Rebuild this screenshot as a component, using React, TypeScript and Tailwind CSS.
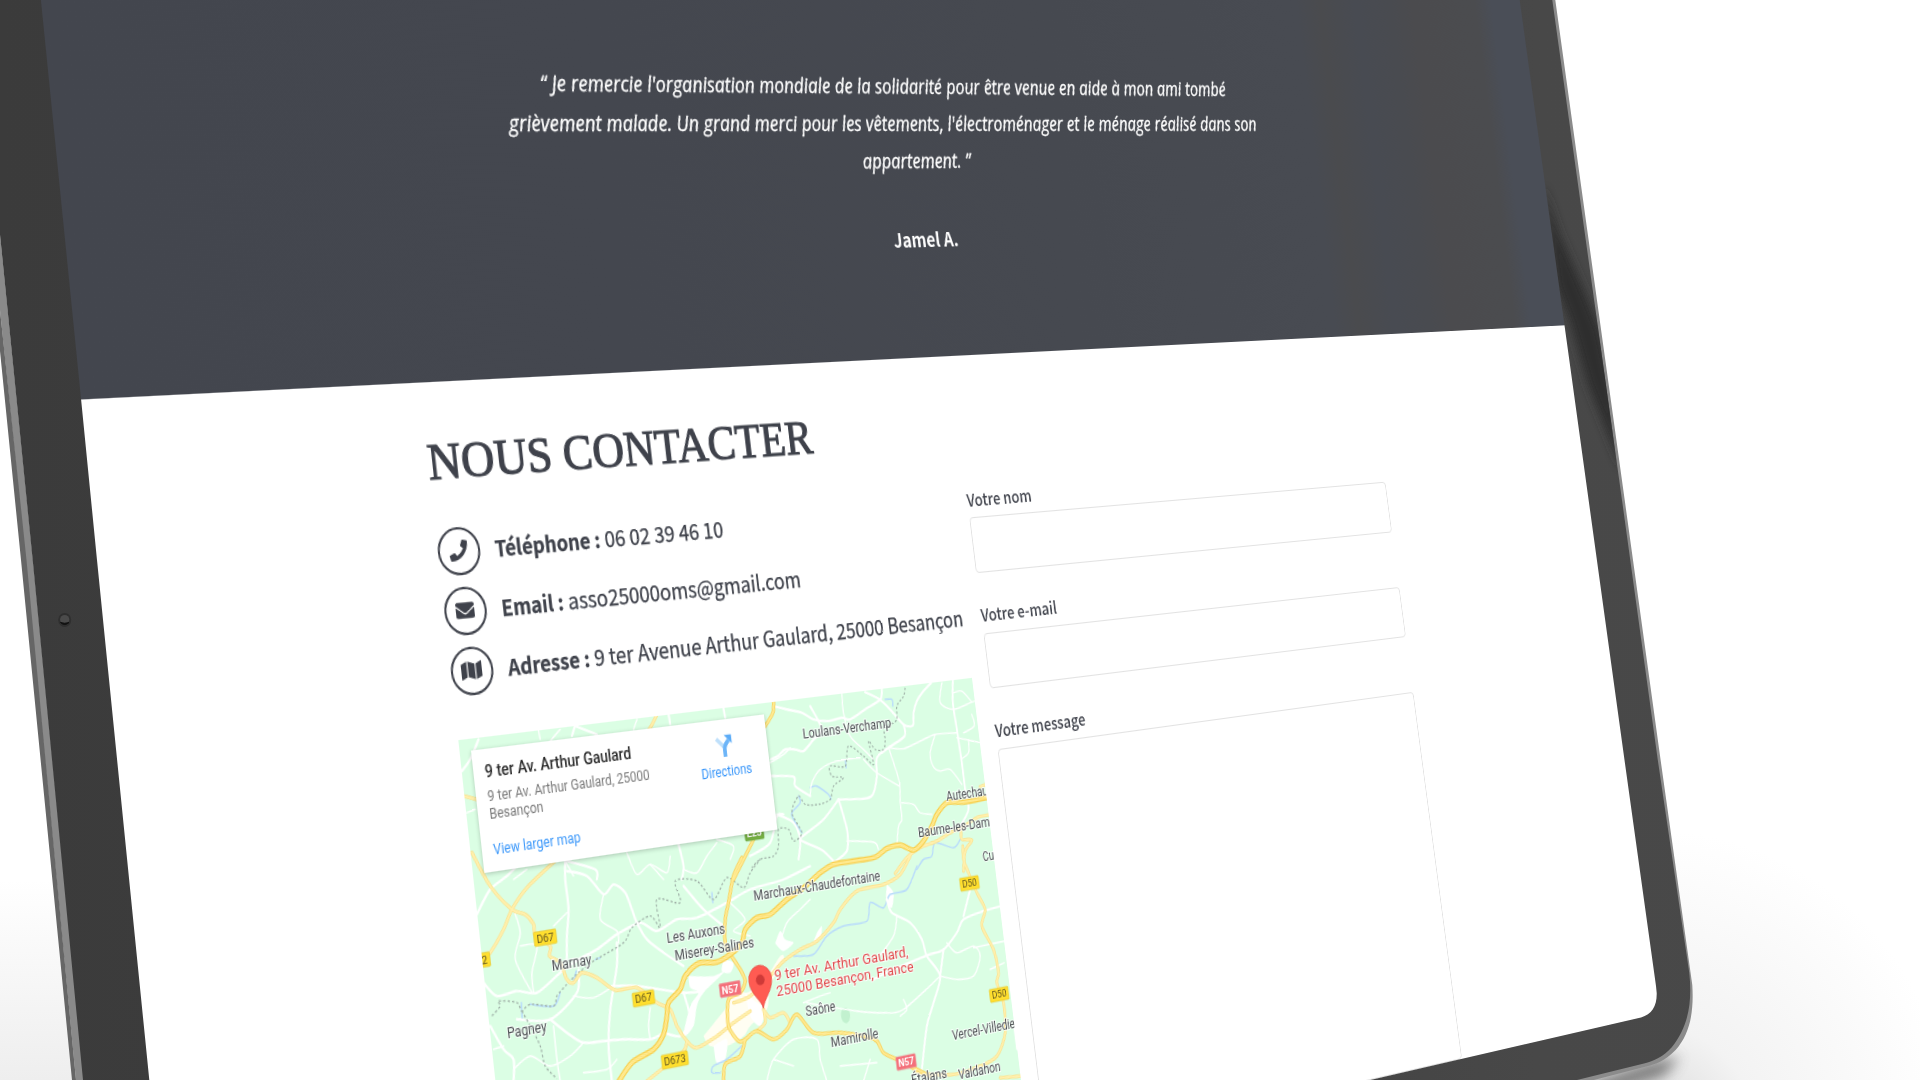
import React from "react";
import { FaEnvelope, FaMap, FaPhone } from "react-icons/fa";

type Pt = [number, number];

/* ---------- map geometry ---------- */

// Perspective of the tilted page: page units (u, v in 0..1) to viewport pixels.
const PX = { a: 2072.8, b: 91.6, c: 81.1 };
const PY = { d: 48.4, e: 923.4, f: 399.5 };
const PW = { g: 0.37675, h: -0.0236 };

function toPage(x: number, y: number): Pt {
  const a = PX.a - PW.g * x;
  const b = PX.b - PW.h * x;
  const r = x - PX.c;
  const c = PY.d - PW.g * y;
  const d = PY.e - PW.h * y;
  const s = y - PY.f;
  const det = a * d - b * c;
  return [((r * d - b * s) / det) * 1732, ((a * s - c * r) / det) * 750];
}

// The map is surveyed on four tiles, each with its origin and three units to a pixel.
const TILES: Record<string, Pt> = {
  A: [750, 670],
  B: [450, 860],
  C: [740, 860],
  D: [450, 680],
};

function at(tile: string, x: number, y: number): Pt {
  const [ox, oy] = TILES[tile];
  return toPage(ox + x / 3, oy + y / 3);
}

function trace(spec: string): string {
  const tile = spec[0];
  const pts = spec
    .slice(2)
    .split(" ")
    .map((p) => {
      const [x, y] = p.split(",").map(Number);
      return at(tile, x, y);
    });
  let d = `M${pts[0][0].toFixed(1)} ${pts[0][1].toFixed(1)}`;
  for (let i = 0; i < pts.length - 1; i++) {
    const p0 = pts[Math.max(0, i - 1)];
    const p1 = pts[i];
    const p2 = pts[i + 1];
    const p3 = pts[Math.min(pts.length - 1, i + 2)];
    const k = 7;
    d += `C${(p1[0] + (p2[0] - p0[0]) / k).toFixed(1)} ${(p1[1] + (p2[1] - p0[1]) / k).toFixed(1)} ${(p2[0] - (p3[0] - p1[0]) / k).toFixed(1)} ${(p2[1] - (p3[1] - p1[1]) / k).toFixed(1)} ${p2[0].toFixed(1)} ${p2[1].toFixed(1)}`;
  }
  return d;
}

const MOTORWAYS = [
  "B 500,675 545,610 610,570 640,525 650,470 655,430 690,390 705,350 745,312 800,308 840,285 875,250 885,210 920,175 960,165 1010,120 1060,85 1110,40 1150,15 1210,5 1275,-7 1310,-33 1350,-43 1390,-28 1420,-55 1445,-100 1460,-135 1490,-170 1540,-172 1620,-188",
];

const MAIN_ROADS = [
  "B 875,-5 850,50 835,130 825,180 825,250 838,285",
  "B 840,285 870,330 885,365 870,400 835,420 835,500 865,545 885,540 920,515 970,540 1010,510 1040,465 1090,520 1170,520 1240,530 1280,545 1300,580 1340,600 1400,630 1440,650",
  "B 885,540 870,590 825,615 820,670",
  "D 970,62 968,100 945,140",
  "D 915,470 880,540 850,600",
];

const MINOR_ROADS = [
  "B 65,-20 120,80 185,150 225,165 250,195 255,225 300,260 298,290 330,310 350,360 370,370 395,340 440,355 495,392 560,385 620,430 660,450 680,500 710,545 740,565 800,530 850,490 900,455",
  "B 320,0 230,85 185,150 160,210 120,280 90,310",
  "B 590,665 640,625 700,575 710,545",
  "B 1380,-10 1350,45 1300,75 1220,95 1170,150 1150,190 1100,245 1050,270 1000,305 960,350 900,410 850,430",
  "B 940,450 960,475 1000,460 1020,490",
  "B 940,450 945,490 920,515",
  "C 668,-40 670,0 685,40 710,100 735,150 725,200 760,270 775,340 770,370 790,430 795,520 770,590 720,620 640,645 540,640 500,610",
  "C 780,655 842,650",
  "A 435,612 470,565 510,535 560,515 600,490 630,480 635,510 665,512 645,545 640,605",
  "A 630,480 680,445 722,435",
  "A 690,352 708,344",
  "D 620,105 600,145 560,200",
  "D 40,350 80,360",
];

const LANES = [
  "A 70,110 110,120 155,130 190,150 235,155 275,145 300,150 345,120 390,90 395,60",
  "A 345,68 385,88 420,120 460,165 488,168 490,130 500,95 520,65 543,40",
  "A 460,165 463,200 415,235 380,265 380,320 368,375 340,388 265,390",
  "A 62,270 85,258 105,240 135,240 160,245 190,210 215,180 180,110",
  "A 62,320 130,322 135,350 180,380",
  "A 265,390 280,440 292,490 290,545 250,580",
  "A 265,390 220,450 170,490 150,510 190,530 220,545 250,575",
  "A 80,435 130,460 150,510 145,570",
  "A 608,32 608,100 620,180 635,280 645,360 655,420 630,470",
  "A 0,560 60,520 80,440 100,435",
  "B 345,-5 345,60 355,150 350,230 350,300",
  "B 350,35 410,50 460,105 490,75 525,100 545,150 560,190 590,240 640,280 700,320",
  "B 220,0 170,50 120,90 80,165",
  "B 100,370 140,410 200,395 260,400 330,340 385,300 440,270 500,225 570,190 620,215 680,180 740,175 830,130 900,90 1000,60 1080,20",
  "B 700,80 760,150 820,200",
  "B 500,250 500,320 480,450 475,560 485,665",
  "B 485,380 560,380 700,400 760,395",
  "B 385,330 380,400 300,480 200,480",
  "B 300,480 350,520 400,550 460,545 520,540 600,540 640,520",
  "B 120,500 160,570 190,600 190,665",
  "B 700,400 720,480 690,530 640,520",
  "C 440,120 455,160 510,190 545,240 560,290 600,350 580,430 560,500 545,630",
  "C 782,140 730,155 670,180 650,220 610,270 555,290 440,340 400,360",
  "C 610,270 600,350",
  "C 690,90 670,170",
  "D 85,180 60,240 35,275",
  "D 375,138 365,170",
  "D 375,140 440,165",
  "D 655,105 660,135",
  "D 820,88 825,115",
  "D 685,495 700,560 695,600",
  "D 440,600 435,570 350,545",
];

const TRACKS = [
  "A 275,75 280,130 300,200 340,240 370,270",
  "A 180,380 185,340 210,300 260,275 330,265",
  "A 415,235 430,280 448,340 450,400 455,450 445,470 440,530",
  "A 340,270 380,310 448,350",
  "A 455,400 490,405 510,430 545,435",
  "A 575,40 570,100 610,120 665,98 695,90",
  "A 610,70 635,65 665,98",
  "A 665,135 672,170 640,190",
  "A 415,235 460,238 510,215 555,195 620,190",
  "A 555,195 540,250 548,290 570,305 600,300 635,345",
  "A 620,205 655,212 690,220",
  "A 655,212 655,250 632,270",
  "A 290,515 370,518 385,540",
  "B 460,105 450,180 500,215 505,250",
  "B 350,160 310,200",
  "B 190,150 210,220 195,300 245,400",
  "B 210,260 260,258 245,340 250,400",
  "B 310,500 320,600 330,665",
  "B 130,570 160,560",
  "B 190,630 240,590 300,620 360,590 400,550",
  "B 400,640 470,630 500,600",
  "B 370,410 430,415 490,380",
  "B 600,445 595,500 600,540",
  "B 950,665 970,600 1030,540 1100,540 1110,600 1130,665",
  "B 970,600 1030,620",
  "B 1060,430 1110,410 1140,400",
  "B 990,250 1010,190 1050,150 1080,120",
  "B 1340,170 1330,230 1280,300",
  "B 840,130 885,180 850,215 900,230",
  "C 600,350 650,360 700,350 720,290 700,260 650,280 620,250",
  "C 700,265 792,245",
  "C 750,330 792,310",
  "C 200,430 350,455 430,460 490,450 600,350",
  "C 390,600 370,665",
  "C 300,620 410,610",
  "C 820,490 830,570",
  "C 480,470 500,450 490,420",
  "D 265,155 270,180",
  "D 560,120 550,150",
  "D 50,400 75,390",
  "D 230,570 190,600",
  "D 345,545 370,590",
  "D 530,520 560,585 600,555 650,580 660,530",
  "D 600,555 640,600",
  "D 700,570 740,580 770,530 800,490",
  "D 840,540 850,500 800,480",
  "D 960,250 1000,225 1020,205",
  "D 330,150 300,185",
];

const BORDERS = [
  "A 465,55 460,80 440,110 440,150 420,165 400,170 405,210 400,240 375,240 355,215 370,285 340,260 295,230 285,290 240,290 245,320 280,325 250,350 240,390 205,405 165,405 145,380 125,430 155,490 130,515 115,480 85,480 85,530 70,560 30,570 5,595",
  "B 125,470 150,440 145,425 200,430 215,455 240,435 310,440 320,410 350,375 385,340 430,305 520,250 545,205 600,170 630,205 620,120 690,130 675,65 740,65 790,120 830,55 880,85 900,40 930,0",
  "B 215,455 240,500 270,560 285,620 320,658",
];

const RIVERS = [
  "A 145,380 150,400 125,430 130,450 155,490",
  "A 180,355 200,350 235,375 242,390",
  "A 285,270 288,295",
  "A 405,90 425,90 428,110",
  "A 500,600 520,570 545,560 555,520 610,535 630,510",
  "B 378,335 370,368",
  "B 213,430 216,478",
  "B 330,400 310,440 240,435",
  "B 1400,20 1370,90 1320,105 1300,145 1260,130 1250,185 1180,200 1130,230 1090,285 1030,290",
  "B 875,560 830,600 790,620 785,640 810,640",
  "B 450,295 435,300",
  "B 785,100 788,130",
];

const TOWNS = [
  "B 760,530 800,480 830,440 850,380 890,400 950,350 990,290 1000,300 960,380 950,450 900,500 880,530 830,560 780,560 760,530",
];

const SUBURBS = [
  "B 715,350 790,350 830,330 760,400 740,440 730,500 700,530 720,440 745,400 720,385 715,350",
  "B 885,400 920,430 945,450 930,500 900,470 885,400",
  "B 820,300 850,310 840,340 815,335 820,300",
  "B 975,252 990,215 1005,240 1030,250 1000,275 975,252",
  "B 790,560 830,540 825,600 800,612 790,560",
  "B 1310,75 1330,100 1325,145 1308,125 1310,75",
  "B 1100,220 1115,200 1110,240 1090,250 1100,220",
];

interface Label {
  text: string;
  tile: string;
  from: Pt;
  to: Pt;
}

const LABELS: Label[] = [
  { text: "Loulans-Verchamp", tile: "A", from: [159, 207], to: [424, 175] },
  { text: "Autechaux", tile: "A", from: [590, 394], to: [728, 374] },
  { text: "Baume-les-Dames", tile: "A", from: [505, 503], to: [752, 467] },
  { text: "Cusance", tile: "A", from: [699, 576], to: [806, 560] },
  { text: "Marchaux-Chaudefontaine", tile: "B", from: [912, 123], to: [1291, 63] },
  { text: "Les Auxons", tile: "B", from: [651, 251], to: [826, 227] },
  { text: "Miserey-Salines", tile: "B", from: [675, 303], to: [913, 264] },
  { text: "Marnay", tile: "B", from: [306, 334], to: [425, 314] },
  { text: "Pagney", tile: "B", from: [172, 537], to: [291, 517] },
  { text: "Saône", tile: "B", from: [1068, 471], to: [1157, 455] },
  { text: "Mamirolle", tile: "B", from: [1144, 565], to: [1286, 538] },
  { text: "Vercel-Villedieu", tile: "C", from: [638, 544], to: [842, 504] },
  { text: "Valdahon", tile: "C", from: [656, 659], to: [783, 643] },
  { text: "Étalans", tile: "C", from: [515, 678], to: [622, 660] },
];

const ADDRESS: Label[] = [
  { text: "9 ter Av. Arthur Gaulard,", tile: "B", from: [974, 363], to: [1376, 298] },
  { text: "25000 Besançon, France", tile: "B", from: [980, 412], to: [1392, 341] },
];

interface Shield {
  text: string;
  tile: string;
  x: number;
  y: number;
  w: number;
  tone: "yellow" | "red" | "green";
}

const SHIELDS: Shield[] = [
  { text: "D67", tile: "B", x: 285, y: 235, w: 22, tone: "yellow" },
  { text: "D67", tile: "B", x: 580, y: 417, w: 22, tone: "yellow" },
  { text: "D673", tile: "B", x: 674, y: 602, w: 27, tone: "yellow" },
  { text: "D12", tile: "B", x: 85, y: 304, w: 22, tone: "yellow" },
  { text: "D50", tile: "C", x: 688, y: 72, w: 22, tone: "yellow" },
  { text: "D50", tile: "C", x: 777, y: 405, w: 22, tone: "yellow" },
  { text: "N57", tile: "B", x: 840, y: 389, w: 22, tone: "red" },
  { text: "N57", tile: "C", x: 498, y: 608, w: 22, tone: "red" },
  { text: "E23", tile: "D", x: 912, y: 461, w: 20, tone: "green" },
];

const SHIELD_FILL = { yellow: "#ffdf2e", red: "#f4707a", green: "#76b043" };
const SHIELD_EDGE = { yellow: "#e8c832", red: "#ee8d94", green: "#6aa33b" };

function Strokes({ lines, color, width, dash }: { lines: string[]; color: string; width: number; dash?: string }) {
  return (
    <g fill="none" stroke={color} strokeWidth={width} strokeDasharray={dash} strokeLinecap={dash ? "butt" : "round"} strokeLinejoin="round">
      {lines.map((l) => (
        <path key={l} d={trace(l)} />
      ))}
    </g>
  );
}

function MapText({ label, size, fill }: { label: Label; size: number; fill: string }) {
  const [x, y] = at(label.tile, label.from[0], label.from[1]);
  const [x2] = at(label.tile, label.to[0], label.to[1]);
  return (
    <text
      x={x}
      y={y}
      fontSize={size}
      fill={fill}
      stroke="#ffffff"
      strokeWidth={1.8}
      strokeOpacity={0.8}
      paintOrder="stroke"
      textLength={x2 - x}
      lengthAdjust="spacingAndGlyphs"
    >
      {label.text}
    </text>
  );
}

function MapDrawing() {
  const [px, py] = at("B", 940, 447);
  const [gx, gy] = at("C", 316, 468);
  return (
    <svg viewBox="305.7 304.5 551 446" className="block h-[446px] w-[551px] font-[Roboto,sans-serif]">
      <rect x="305" y="304" width="552" height="447" fill="#dbfee4" />
      <ellipse cx={gx} cy={gy} rx="5" ry="7" fill="#c2f1cf" />
      {TOWNS.map((t) => (
        <path key={t} d={trace(t)} fill="#fffef2" />
      ))}
      {SUBURBS.map((t) => (
        <path key={t} d={trace(t)} fill="#ffffff" />
      ))}
      <Strokes lines={RIVERS} color="#b9dcfb" width={1.5} />
      <Strokes lines={TRACKS} color="#ffffff" width={1.4} />
      <Strokes lines={LANES} color="#ffffff" width={2.2} />
      <Strokes lines={BORDERS} color="#9fb0a7" width={1.2} dash="2.2 2" />
      <Strokes lines={MINOR_ROADS} color="#fbe08a" width={3.2} />
      <Strokes lines={MINOR_ROADS} color="#fff0ae" width={1.9} />
      <Strokes lines={MAIN_ROADS} color="#f8d25c" width={3.6} />
      <Strokes lines={MAIN_ROADS} color="#ffeb94" width={1.9} />
      <Strokes lines={MOTORWAYS} color="#f9cf4c" width={5} />
      <Strokes lines={MOTORWAYS} color="#fff0a0" width={2.4} />
      <Strokes lines={MOTORWAYS} color="#fbd965" width={0.6} />
      {SHIELDS.map((s) => {
        const [x, y] = at(s.tile, s.x, s.y);
        return (
          <g key={`${s.tile}${s.x}`}>
            <rect x={x - s.w / 2} y={y - 5.9} width={s.w} height={11.8} rx={0.8} fill={SHIELD_FILL[s.tone]} stroke={SHIELD_EDGE[s.tone]} strokeWidth={0.7} />
            <text x={x} y={y + 3.4} fontSize={9.6} textAnchor="middle" fontWeight={s.tone === "yellow" ? 400 : 700} fill={s.tone === "yellow" ? "#5f5420" : "#ffffff"}>
              {s.text}
            </text>
          </g>
        );
      })}
      {LABELS.map((l) => (
        <MapText key={l.text} label={l} size={12.2} fill="#4c5053" />
      ))}
      {ADDRESS.map((l) => (
        <MapText key={l.text} label={l} size={13.6} fill="#e0484a" />
      ))}
      <g transform={`translate(${px} ${py})`}>
        <path d="M0 0C-1.5-8-12.2-14-12.2-25.5A12.2 12.2 0 0 1 12.2-25.5C12.2-14 1.5-8 0 0Z" fill="#ff5b52" stroke="#e2463f" strokeWidth="0.7" />
        <circle cx="0" cy="-25" r="4.6" fill="#cf3a38" />
      </g>
    </svg>
  );
}

function MapCard() {
  return (
    <div className="absolute left-[11px] top-[10px] flex h-[103px] w-[301px] justify-between bg-white pl-[11.5px] pr-[19px] font-[Roboto,sans-serif] text-[12px] shadow-[0_1px_4px_rgba(0,0,0,0.22)]">
      <div className="flex flex-col">
        <p className="mt-[9.5px] text-[14px] leading-[18px] font-medium text-[#2b2b2b]">9 ter Av. Arthur Gaulard</p>
        <p className="mt-[5.5px] w-[180px] leading-[15px] text-[#7a7a7a]">9 ter Av. Arthur Gaulard, 25000 Besançon</p>
        <p className="mt-[15px] leading-[15px] text-[#3a97fa]">View larger map</p>
      </div>
      <div className="flex flex-col items-center pt-[13px]">
        <svg viewBox="0 0 18 20" className="h-[20px] w-[18px]">
          <path d="M1 3.5 8.3 11" stroke="#bfe0fb" strokeWidth="3.6" fill="none" />
          <path d="M9 20V13.5C9 10 10.5 8.5 14 5.5" stroke="#6db5f8" strokeWidth="3.9" fill="none" />
          <path d="M9.5 0.8H17.2V8.8Z" fill="#5cacf7" />
        </svg>
        <span className="mt-[6px] leading-[14px] text-[#3a97fa]">Directions</span>
      </div>
    </div>
  );
}

/* ---------- page ---------- */

function Testimonial() {
  return (
    <section className="flex h-[400px] flex-col items-center bg-[linear-gradient(91deg,#43464e_0%,#44474f_30%,#464950_60%,#484b52_80%,#4a4b4e_82%,#484b52_85%,#494b50_88%,#4b4b4e_90%,#4b4c4f_95.5%,#4a4e57_97%,#4a4e57_100%)] pt-[121.6px] text-center text-white shadow-[3px_0_0_0_#4a4e57,-3px_0_0_0_#43464e]">
      <p className="pl-[2px] font-['Open_Sans',sans-serif] text-[19.5px] leading-[36px] whitespace-nowrap italic [-webkit-text-stroke:0.3px_#ffffff]">
        “ Je remercie l'organisation mondiale de la solidarité pour être venue en aide à mon ami tombé
        <br />
        grièvement malade. Un grand merci pour les vêtements, l'électroménager et le ménage réalisé dans son
        <br />
        appartement. ”
      </p>
      <p className="mt-[39.6px] text-[18.4px] leading-[36px] font-bold">Jamel A.</p>
    </section>
  );
}

function ContactRow({ icon, label, value }: { icon: React.ReactNode; label: string; value: string }) {
  return (
    <li className="flex h-[40px] items-center gap-[14.6px]">
      <span className="flex size-[41.4px] shrink-0 items-center justify-center rounded-full border-[2.8px] border-[#3f424b]">{icon}</span>
      <p className="text-[19.45px] leading-[40px] whitespace-nowrap [-webkit-text-stroke:0.25px_#3f424b]">
        <strong className="text-[18.6px] font-bold">{label} :</strong> {value}
      </p>
    </li>
  );
}

function Field({ label, area }: { label: string; area?: boolean }) {
  return (
    <label className="flex flex-col gap-[5.6px]">
      <span className="text-[16px] leading-[24px] font-medium">{label}</span>
      {area ? (
        <textarea className="h-[377px] w-full resize-none rounded-[4px] border border-[#e2e2e2] bg-transparent" />
      ) : (
        <input className="h-[52.4px] w-full rounded-[4px] border border-[#e2e2e2] bg-transparent" />
      )}
    </label>
  );
}

function Contact() {
  return (
    <section className="h-[750px] bg-white px-[305.5px] pt-[42.8px] text-[#3f424b] shadow-[3px_0_0_0_#ffffff,-3px_0_0_0_#ffffff]">
      <h2 className="h-[50px] font-['Liberation_Serif',serif] text-[45.1px] leading-[50px] whitespace-nowrap [-webkit-text-stroke:1.1px_#3f424b]">NOUS CONTACTER</h2>
      <div className="grid grid-cols-[551px_551px] gap-[20px]">
        <div className="pt-[32.6px]">
          <ul className="flex flex-col gap-[11px]">
            <ContactRow icon={<FaPhone className="size-[18px]" />} label="Téléphone" value="06 02 39 46 10" />
            <ContactRow icon={<FaEnvelope className="size-[18px]" />} label="Email" value="asso25000oms@gmail.com" />
            <ContactRow icon={<FaMap className="size-[20px]" />} label="Adresse" value="9 ter Avenue Arthur Gaulard, 25000 Besançon" />
          </ul>
          <div className="relative mt-[37px] h-[446px] overflow-hidden">
            <MapDrawing />
            <MapCard />
          </div>
        </div>
        <form className="flex flex-col gap-[27.2px] pt-[32.1px]">
          <Field label="Votre nom" />
          <Field label="Votre e-mail" />
          <Field label="Votre message" area />
        </form>
      </div>
    </section>
  );
}

/* ---------- device ---------- */

function Backdrop() {
  return (
    <svg viewBox="0 0 1920 1080" className="absolute inset-0 h-full w-full">
      <defs>
        <linearGradient id="floorLeft" x1="0" y1="0" x2="0" y2="1">
          <stop offset="0" stopColor="#ffffff" />
          <stop offset="1" stopColor="#eeeeee" />
        </linearGradient>
        <radialGradient id="floorRight" cx="1650" cy="1130" r="300" gradientUnits="userSpaceOnUse">
          <stop offset="0" stopColor="#d8d8d8" />
          <stop offset="0.35" stopColor="#f3f3f3" />
          <stop offset="1" stopColor="#ffffff" />
        </radialGradient>
        <filter id="soft" x="-20%" y="-60%" width="140%" height="220%">
          <feGaussianBlur stdDeviation="7" />
        </filter>
      </defs>
      <rect width="1920" height="1080" fill="#ffffff" />
      <rect y="880" width="120" height="200" fill="url(#floorLeft)" />
      <rect x="1400" y="800" width="520" height="280" fill="url(#floorRight)" />
      <path d="M1560 1092 1650 1062 1680 1056 1664 1076 1600 1096Z" fill="#555555" opacity="0.75" filter="url(#soft)" />
    </svg>
  );
}

function Bezel() {
  return (
    <svg viewBox="0 0 1920 1080" className="pointer-events-none absolute inset-0 h-full w-full">
      <defs>
        <linearGradient id="face" x1="0" y1="0" x2="1920" y2="0" gradientUnits="userSpaceOnUse">
          <stop offset="0" stopColor="#3b3b3b" />
          <stop offset="0.6" stopColor="#414141" />
          <stop offset="0.8" stopColor="#484848" />
          <stop offset="1" stopColor="#494949" />
        </linearGradient>
        <clipPath id="rightFace">
          <path d="M1519.7 0 1564.5 325.3 1624.5 760 1658 760 1622 500 1552.3 0Z" />
        </clipPath>
        <filter id="streak" x="-40%" y="-20%" width="180%" height="140%">
          <feGaussianBlur stdDeviation="5" />
        </filter>
      </defs>
      <path d="M0 310 25.5 560 76 1080 84 1080 33 560 0 234Z" fill="#8a8a8a" />
      <path d="M0 351 21 560 72 1080 76 1080 26.5 560 0 310Z" fill="#666666" />
      <path d="M1553.5 -10 1555.3 0 1624.7 500 1660.6 760 1692.3 985C1694 1012 1690 1034 1675.6 1050C1664 1062 1655 1064 1648 1066L1592 1080.5 1570 1082 1640 1050 1676 1000 1640 760 1600 500 1540 0Z" fill="#8b8b8b" />
      <path
        fillRule="evenodd"
        fill="url(#face)"
        d="M-40 -20H1549.5L1552.3 0 1622 500 1657.8 760 1689.3 973C1692.5 1003 1688 1027 1672 1047C1663 1057 1654 1061 1644 1063.5L1577 1080 1500 1100H85L83 1080 32.7 560 0 234.7-24 0ZM38.9 -20 81.1 399.5 97 560 149.3 1080 151.5 1100H1290L1370.4 1080 1641 1017.5C1652 1014.5 1657 1006 1656.7 993L1656 986 1624.5 760 1564.5 325.3 1519.7 0 1517 -20Z"
      />
      <g clipPath="url(#rightFace)">
        <path d="M1543 185 1560 235 1584 290 1600 330 1612 385 1622 470 1606 430 1588 385 1570 322 1556 285Z" fill="#2f2f2f" filter="url(#streak)" />
      </g>
      <ellipse cx="64.7" cy="620" rx="6.5" ry="7" fill="#2f2f2f" />
      <ellipse cx="64.7" cy="619.5" rx="4.6" ry="4.6" fill="#4b4b4b" />
      <path d="M60.5 622.5Q64.7 626.5 69 622.5Q64.7 624 60.5 622.5Z" fill="#111111" stroke="#111111" strokeWidth="1" />
    </svg>
  );
}

export default function App() {
  return (
    <div className="relative h-[1080px] w-[1920px] overflow-hidden bg-white font-['Noto_Sans_CJK_SC',sans-serif]">
      <Backdrop />
      <main className="absolute left-0 top-0 h-[1150px] w-[1732px] origin-top-left [transform:matrix3d(1.196767,0.0279446,0,0.0002175231,0.1221333,1.2312,0,-0.00003146667,0,0,1,0,32.2467,-92.98,0,1.0125867)]">
        <Testimonial />
        <Contact />
      </main>
      <Bezel />
    </div>
  );
}
